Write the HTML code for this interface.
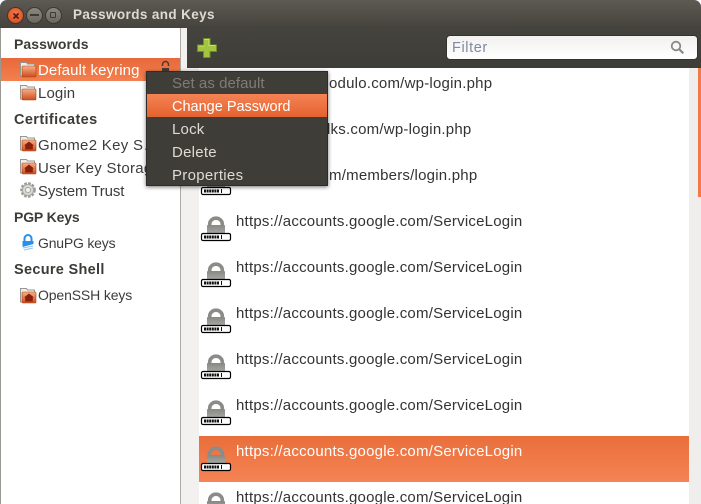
<!DOCTYPE html>
<html><head><meta charset="utf-8"><style>
html,body{margin:0;padding:0;width:701px;height:504px;overflow:hidden;background:#fff}
body{position:relative;font-family:"Liberation Sans",sans-serif;font-size:15px;color:#3c3c3c}
.a{position:absolute}
.t{position:absolute;white-space:nowrap;line-height:20px;height:20px}
.h{font-weight:bold;font-size:14.5px;color:#3c3b37;left:14px}
.s{left:38px;color:#3c3c3c}
.u{left:236px;letter-spacing:.22px;color:#333;font-size:15px}
.m{left:172px;color:#dfdbd2}
svg{position:absolute;overflow:visible}
</style></head><body>
<svg width="0" height="0" style="position:absolute"><defs>
<linearGradient id="fg" x1="0" y1="0" x2="0" y2="1"><stop offset="0" stop-color="#f6b088"/><stop offset="1" stop-color="#cc4c1c"/></linearGradient>
<linearGradient id="lg" x1="0" y1="0" x2="0" y2="1"><stop offset="0" stop-color="#878884"/><stop offset="1" stop-color="#a8a9a4"/></linearGradient>
<g id="folder"><path d="M.5 1.500h6l1 1.500h7v12H.5z" fill="#f0eee9" stroke="#9a9590" stroke-width="1"/><rect x="2" y="5" width="14" height="11" rx="1" fill="url(#fg)" stroke="#a8441a" stroke-width=".6"/></g>
<g id="home"><use href="#folder"/><path d="M9 6.500l5 4h-1.200v4H5.200v-4H4z" fill="#8a1f0c"/></g>
<g id="lock"><path d="M8.700 9V7a6.300 5.800 0 0 1 12.600 0V9" fill="none" stroke="#8b8c88" stroke-width="3.600"/><rect x="6" y="8" width="18" height="9" rx="1" fill="url(#lg)"/><rect x=".5" y="16.500" width="29" height="7" rx="1.500" fill="#fff" stroke="#000" stroke-width="1.200"/><path d="M3 20h15" stroke="#111" stroke-width="3" stroke-dasharray="2 .6"/><rect x="20" y="18" width="1" height="4" fill="#111"/></g>
</defs></svg>

<!-- titlebar -->
<div class="a" style="left:0;top:0;width:701px;height:28px;background:linear-gradient(#5c5a52,#45433d);border-radius:7px 7px 0 0"></div>
<div class="a" style="left:7px;top:7px;width:17px;height:17px;border-radius:50%;background:radial-gradient(circle at 50% 40%,#f47a4a,#d8431a);border:1px solid #3a3833;box-sizing:border-box"></div>
<svg style="left:10.500px;top:10.500px" width="10" height="10"><path d="M2.500 2.500l5 5M7.500 2.500l-5 5" stroke="#4a2012" stroke-width="1.800"/></svg>
<div class="a" style="left:26px;top:7px;width:17px;height:17px;border-radius:50%;background:linear-gradient(#8a877e,#6b6860);border:1px solid #3a3833;box-sizing:border-box"></div>
<div class="a" style="left:30px;top:14px;width:9px;height:2px;background:#3d3b36"></div>
<div class="a" style="left:45px;top:7px;width:17px;height:17px;border-radius:50%;background:linear-gradient(#8a877e,#6b6860);border:1px solid #3a3833;box-sizing:border-box"></div>
<div class="a" style="left:50px;top:12px;width:4px;height:4px;border:1.500px solid #3d3b36;border-radius:1px"></div>
<div class="t" style="left:73px;top:5px;font-weight:bold;font-size:13.500px;color:#dfdbd2;letter-spacing:.38px">Passwords and Keys</div>

<!-- sidebar -->
<div class="a" style="left:0;top:28px;width:1px;height:476px;background:#9a9892"></div>
<div class="a" style="left:1px;top:28px;width:179px;height:476px;background:#fff"></div>
<div class="a" style="left:180px;top:28px;width:1px;height:476px;background:#aeaaa3"></div>
<div class="a" style="left:181px;top:28px;width:18px;height:476px;background:#f2f1f0"></div>

<!-- toolbar -->
<div class="a" style="left:187px;top:28px;width:514px;height:40px;background:linear-gradient(#45433d,#3f3d38)"></div>
<svg style="left:197px;top:38px" width="20" height="20"><path d="M6.500 .5h6.500v6.500h6.500v6.500h-6.500v6h-6.500v-6H.5V7h6z" fill="#a3c43e" stroke="#6f8f26" stroke-width="1"/><path d="M7.500 1.500h4.500v6h6.500M1.500 8h6" stroke="#cde070" stroke-width="1" fill="none"/></svg>
<div class="a" style="left:446px;top:35px;width:252px;height:25px;box-sizing:border-box;background:linear-gradient(#f2f1f0,#fff);border-radius:4px;border:1px solid #35332e"></div>
<div class="t" style="left:452px;top:38px;color:#7d8aa0;font-size:14.500px;letter-spacing:.6px">Filter</div>
<svg style="left:670px;top:40px" width="15" height="15"><circle cx="6" cy="6" r="4.300" fill="none" stroke="#8a8a86" stroke-width="1.800"/><path d="M9.300 9.300l4 4" stroke="#8a8a86" stroke-width="2.200"/></svg>

<!-- list -->
<div class="a" style="left:199px;top:68px;width:490px;height:436px;background:#fff"></div>
<div class="a" style="left:689px;top:68px;width:12px;height:436px;background:#f0eeec"></div>
<div class="a" style="left:698px;top:68px;width:3px;height:129px;background:#f47a45"></div>
<div class="a" style="left:199px;top:436px;width:490px;height:46px;background:linear-gradient(#e96f3a,#f58355)"></div>

<svg style="left:201px;top:171px" width="30" height="24"><use href="#lock"/></svg>
<svg style="left:201px;top:217px" width="30" height="24"><use href="#lock"/></svg>
<svg style="left:201px;top:263px" width="30" height="24"><use href="#lock"/></svg>
<svg style="left:201px;top:309px" width="30" height="24"><use href="#lock"/></svg>
<svg style="left:201px;top:355px" width="30" height="24"><use href="#lock"/></svg>
<svg style="left:201px;top:401px" width="30" height="24"><use href="#lock"/></svg>
<svg style="left:201px;top:447px" width="30" height="24"><use href="#lock"/></svg>
<svg style="left:201px;top:493px" width="30" height="24"><use href="#lock"/></svg>

<div class="t u" style="top:74px;left:329px">odulo.com/wp-login.php</div>
<div class="t u" style="top:120px;left:327px">lks.com/wp-login.php</div>
<div class="t u" style="top:166px;left:329px">m/members/login.php</div>
<div class="t u" style="top:212px">https://accounts.google.com/ServiceLogin</div>
<div class="t u" style="top:258px">https://accounts.google.com/ServiceLogin</div>
<div class="t u" style="top:304px">https://accounts.google.com/ServiceLogin</div>
<div class="t u" style="top:350px">https://accounts.google.com/ServiceLogin</div>
<div class="t u" style="top:396px">https://accounts.google.com/ServiceLogin</div>
<div class="t u" style="top:442px;color:#fff">https://accounts.google.com/ServiceLogin</div>
<div class="t u" style="top:488px">https://accounts.google.com/ServiceLogin</div>

<!-- sidebar items -->
<div class="t h" style="top:34px;font-size:14px;letter-spacing:.07px">Passwords</div>
<div class="a" style="left:1px;top:58px;width:179px;height:23px;background:linear-gradient(#e8683a,#f3814f)"></div>
<svg style="left:20px;top:61px" width="17" height="17"><use href="#folder"/></svg>
<div class="t s" style="top:61px;color:#fff;letter-spacing:.1px">Default keyring</div>
<svg style="left:160px;top:61px" width="12" height="12"><path d="M2.500 5V3.500a3 3 0 0 1 6 0V5" fill="none" stroke="#4a3a30" stroke-width="1.500"/><rect x="2" y="7" width="7" height="5" fill="#4a3a30"/></svg>
<svg style="left:20px;top:84px" width="17" height="17"><use href="#folder"/></svg>
<div class="t s" style="top:84px;letter-spacing:.1px">Login</div>
<div class="t h" style="top:110px;letter-spacing:.38px">Certificates</div>
<svg style="left:20px;top:135px" width="17" height="17"><use href="#home"/></svg>
<div class="t s" style="top:136px;letter-spacing:.3px">Gnome2 Key S…</div>
<svg style="left:20px;top:158px" width="17" height="17"><use href="#home"/></svg>
<div class="t s" style="top:159px;letter-spacing:.3px">User Key Storage</div>
<svg style="left:20px;top:182px" width="16" height="16"><circle cx="8" cy="8" r="6.300" fill="#dcdcd8" stroke="#9a9a96" stroke-width="3" stroke-dasharray="2.500 1.200"/><circle cx="8" cy="8" r="5.500" fill="#d8d8d4" stroke="#a5a5a1" stroke-width=".8"/><circle cx="8" cy="8" r="2.500" fill="#f4f4f2" stroke="#a5a5a1"/></svg>
<div class="t s" style="top:182px;letter-spacing:-.1px">System Trust</div>
<div class="t h" style="top:207px;font-size:14px;letter-spacing:-.15px">PGP Keys</div>
<svg style="left:21px;top:234px" width="14" height="17"><path d="M3.500 7V4.500a3.500 3.500 0 0 1 7 0V7" fill="none" stroke="#2a8fe8" stroke-width="2"/><path d="M1.500 7h11v3L1.500 13z" fill="#2a8fe8"/><path d="M2 14l10-2M3 16l9-2" stroke="#8cc4f2" stroke-width="1"/></svg>
<div class="t s" style="top:233px;font-size:14px;letter-spacing:-.2px">GnuPG keys</div>
<div class="t h" style="top:260px;letter-spacing:.3px">Secure Shell</div>
<svg style="left:20px;top:287px" width="17" height="17"><use href="#home"/></svg>
<div class="t s" style="top:285px;font-size:14px;letter-spacing:-.13px">OpenSSH keys</div>

<!-- menu -->
<div class="a" style="left:146px;top:71px;width:182px;height:115px;background:#3f3d38;box-shadow:0 1px 4px rgba(0,0,0,.55);outline:1px solid #2e2c28;outline-offset:-1px"></div>
<div class="a" style="left:147px;top:94px;width:180px;height:23px;background:linear-gradient(#f58355,#e4632f)"></div>
<div class="t m" style="top:74px;color:#7f7c74;letter-spacing:.06px">Set as default</div>
<div class="t m" style="top:97px;color:#fff;font-size:14.500px">Change Password</div>
<div class="t m" style="top:120px;letter-spacing:.2px">Lock</div>
<div class="t m" style="top:143px;letter-spacing:.25px">Delete</div>
<div class="t m" style="top:166px;letter-spacing:.3px">Properties</div>
</body></html>
